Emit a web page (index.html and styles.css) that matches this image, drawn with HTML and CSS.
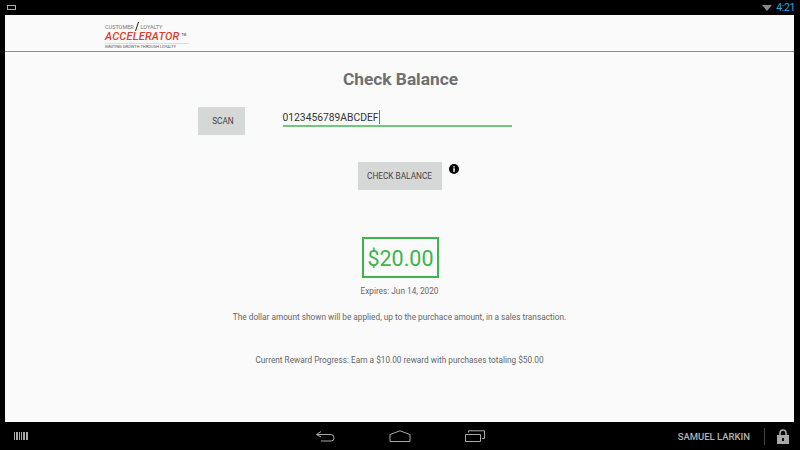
FILE: index.html
```html
<!DOCTYPE html>
<html lang="en">
<head>
    <meta charset="UTF-8">
    <title>Check Balance</title>
    <link rel="stylesheet" href="styles.css">
</head>
<body>
<div class="status-bar">
    <svg class="recents-mini" width="10" height="6" viewBox="0 0 10 6"><rect x="0.5" y="0.5" width="8" height="4" fill="none" stroke="#aaa"/></svg>
    <div class="status-right">
        <svg width="10" height="6" viewBox="0 0 10 6"><path d="M0 0H10L5 6Z" fill="#8a8a8a"/></svg>
        <span class="clock">4:21</span>
    </div>
</div>

<div class="app">
    <div class="app-header">
        <div class="logo">
            <div class="logo-top">CUSTOMER <svg class="logo-slash" width="4" height="9" viewBox="0 0 4 9"><path d="M3.5 0L.5 9" stroke="#222" fill="none"/></svg> LOYALTY</div>
            <div class="logo-main">ACCELERATOR<sup>TM</sup></div>
            <div class="logo-sub">IGNITING GROWTH THROUGH LOYALTY</div>
        </div>
    </div>
    <div class="content">
        <h1 class="title">Check Balance</h1>
        <div class="scan-row">
            <div class="btn btn-scan">SCAN</div>
            <div class="card-input"><span>0123456789ABCDEF</span><span class="caret"></span></div>
        </div>
        <div class="check-row">
            <div class="btn btn-check">CHECK BALANCE</div>
            <svg class="info" width="10" height="10" viewBox="0 0 10 10">
                <circle cx="5" cy="5" r="5" fill="#000"/>
                <rect x="4.3" y="4.2" width="1.5" height="3.6" fill="#fff"/>
                <rect x="4.3" y="2.2" width="1.5" height="1.3" fill="#fff"/>
            </svg>
        </div>
        <div class="amount">$20.00</div>
        <p class="note note-expires">Expires: Jun 14, 2020</p>
        <p class="note note-applied">The dollar amount shown will be applied, up to the purchace amount, in a sales transaction.</p>
        <p class="note note-progress">Current Reward Progress: Earn a $10.00 reward with purchases totaling $50.00</p>
    </div>
</div>

<div class="nav-bar">
    <svg class="barcode" width="14" height="8" viewBox="0 0 14 8" fill="#aaa">
        <rect x="0" width="1" height="8"/><rect x="2" width="2" height="8"/><rect x="5" width="1" height="8"/>
        <rect x="7" width="1" height="8"/><rect x="9" width="2" height="8"/><rect x="12" width="2" height="8"/>
    </svg>
    <div class="nav-keys">
        <svg width="20" height="12" viewBox="0 0 20 12" fill="none" stroke="#a8a8a8"><path d="M6 1.5L1.5 4.5L6 7M1.5 4.5H16Q19 4.5 19 8Q19 11 16 11H6"/></svg>
        <svg width="22" height="12" viewBox="0 0 22 12" fill="none" stroke="#a8a8a8"><path d="M1 4.5L11 .8L21 4.5V11.5H1Z"/></svg>
        <svg width="20" height="12" viewBox="0 0 20 12" fill="none" stroke="#a8a8a8"><path d="M.5 4.5H15.5V11.5H.5ZM3.5 2.5V.8H19.5V8.5H17"/></svg>
    </div>
    <div class="nav-user">
        <span class="user-name">SAMUEL LARKIN</span>
        <span class="divider"></span>
        <svg width="12" height="15" viewBox="0 0 12 15"><path d="M3 6V4Q3 1 6 1T9 4V6" fill="none" stroke="#a8a8a8" stroke-width="1.6"/><path fill-rule="evenodd" d="M0 6H12V15H0ZM5 9V12H7V9Z" fill="#a8a8a8"/></svg>
    </div>
</div>
</body>
</html>
```

FILE: styles.css
```css
html, body {
    margin: 0;
    height: 450px;
    overflow: hidden;
    background-color: #000;
    font-family: Roboto, "Liberation Sans", sans-serif;
}
body {
    display: flex;
    flex-direction: column;
}
.status-bar {
    height: 15px;
    display: flex;
    justify-content: space-between;
    align-items: center;
    padding: 0 5px 0 7px;
}
.status-right {
    display: flex;
    align-items: center;
    gap: 4px;
}
.clock {
    color: #33a5d8;
    font-size: 10.5px;
    letter-spacing: -0.4px;
    white-space: nowrap;
}
.app {
    height: 407px;
    margin: 0 6px 0 5px;
    background-color: #fafafa;
    display: flex;
    flex-direction: column;
}
.app-header {
    height: 36px;
    border-bottom: 1px solid #8c8c8c;
    padding-left: 100px;
    flex: none;
}
.logo {
    width: 84px;
    padding-top: 7px;
}
.logo-top {
    font-size: 5.5px;
    height: 8px;
    line-height: 7px;
    color: #777;
    white-space: nowrap;
}
.logo-slash {
    vertical-align: -2px;
}
.logo-main {
    font-size: 11px;
    line-height: 10px;
    font-weight: 500;
    font-style: italic;
    color: #d9402a;
    letter-spacing: 0.2px;
    white-space: nowrap;
}
.logo-main sup {
    font-size: 3px;
    color: #555;
    font-style: normal;
    vertical-align: 4px;
    margin-left: 2px;
}
.logo-sub {
    font-size: 4px;
    line-height: 5px;
    color: #555;
    border-top: 1px solid #ddd;
    margin-top: 1px;
    white-space: nowrap;
}
.content {
    display: flex;
    flex-direction: column;
    align-items: center;
}
.title {
    margin: 17px 0 0 2px;
    font-size: 17.3px;
    line-height: 21px;
    font-weight: 700;
    color: #6f6f6f;
}
.btn {
    background-color: #d6d7d7;
    border-radius: 1px;
    color: #444;
    font-size: 8.25px;
    height: 28px;
    line-height: 29px;
    text-align: center;
}
.scan-row {
    display: flex;
    align-items: flex-start;
    margin: 17px 90px 0 0;
    width: 314px;
}
.btn-scan {
    width: 47px;
    padding-left: 4px;
    box-sizing: border-box;
}
.card-input {
    margin-left: 38px;
    width: 229px;
    height: 18px;
    line-height: 21px;
    border-bottom: 2px solid #72c77f;
    font-size: 10.3px;
    color: #333;
    display: flex;
}
.caret {
    width: 1px;
    height: 14px;
    margin-top: 3px;
    background-color: #2f9e44;
}
.check-row {
    display: flex;
    align-items: flex-start;
    margin-top: 27px;
    margin-left: 17px;
}
.btn-check {
    width: 84px;
}
.info {
    margin: 2px 0 0 7px;
}
.amount {
    margin: 47px 0 0 2px;
    box-sizing: border-box;
    width: 77px;
    height: 41px;
    line-height: 39px;
    border: 2px solid #3fb34f;
    color: #3fb34f;
    font-size: 21.5px;
    text-align: center;
}
.note {
    margin: 0;
    font-size: 8.25px;
    line-height: 12px;
    color: #666;
    white-space: nowrap;
}
.note-expires {
    margin-top: 7px;
}
.note-applied {
    margin-top: 14px;
}
.note-progress {
    margin-top: 31px;
}
.nav-bar {
    flex: 1;
    display: flex;
    align-items: center;
    padding: 0 11px 0 14px;
    justify-content: space-between;
}
.nav-keys {
    display: flex;
    align-items: center;
    gap: 54px;
    margin-left: 95px;
}
.nav-user {
    display: flex;
    align-items: center;
}
.user-name {
    color: #b4b4b4;
    font-size: 9.5px;
    font-weight: 500;
}
.divider {
    width: 1px;
    height: 17px;
    background-color: #444;
    margin: 0 12px 0 14px;
}
```
